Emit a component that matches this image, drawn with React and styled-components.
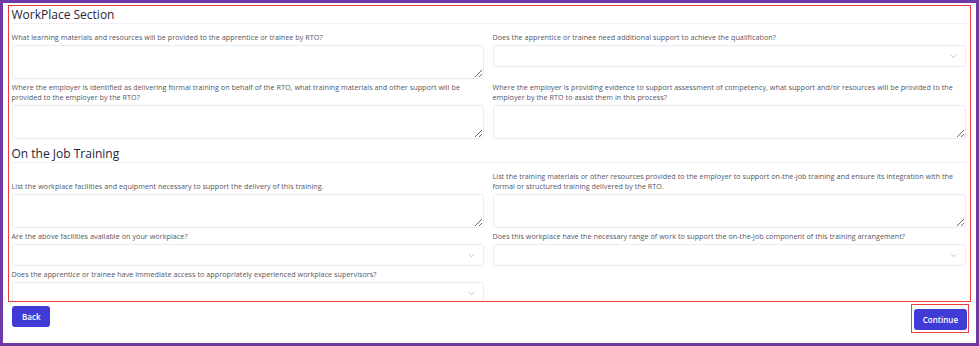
import React from 'react';
import styled, { createGlobalStyle } from 'styled-components';
import { ChevronDown } from 'lucide-react';

const GlobalStyle = createGlobalStyle`
    * { box-sizing: border-box; }
    body {
        margin: 0;
        background: #ffffff;
        font-family: "Open Sans", "Liberation Sans", sans-serif;
    }
`

// each row: [left, right] - labels sit on a common bottom line, inputs on a common top line
const workplace = [
    [
        { label: 'What learning materials and resources will be provided to the apprentice or trainee by RTO?', type: 'text' },
        { label: 'Does the apprentice or trainee need additional support to achieve the qualification?', type: 'select' },
    ],
    [
        { label: 'Where the employer is identified as delivering formal training on behalf of the RTO, what training materials and other support will be provided to the employer by the RTO?', type: 'text' },
        { label: 'Where the employer is providing evidence to support assessment of competency, what support and/or resources will be provided to the employer by the RTO to assist them in this process?', type: 'text' },
    ],
]

const onJob = [
    [
        { label: 'List the workplace facilities and equipment necessary to support the delivery of this training.', type: 'text' },
        { label: 'List the training materials or other resources provided to the employer to support on-the-job training and ensure its integration with the formal or structured training delivered by the RTO.', type: 'text' },
    ],
    [
        { label: 'Are the above facilities available on your workplace?', type: 'select' },
        { label: 'Does this workplace have the necessary range of work to support the on-the-job component of this training arrangement?', type: 'select' },
    ],
    [
        { label: 'Does the apprentice or trainee have immediate access to appropriately experienced workplace supervisors?', type: 'select' },
    ],
]

function Input({ type }) {
    if (type === 'text') return <TextArea />
    return (
        <Select>
            <ChevronDown size={9} color="#9a9aa6" strokeWidth={1.6} />
        </Select>
    )
}

function Rows({ rows }) {
    return (
        <Grid>
            {rows.map((row, r) => (
                <React.Fragment key={r}>
                    {row.map((f, i) => <Label key={'l' + i} style={{ gridRow: r * 2 + 1 }}>{f.label}</Label>)}
                    {row.map((f, i) => <Cell key={'c' + i} style={{ gridRow: r * 2 + 2 }}><Input type={f.type} /></Cell>)}
                </React.Fragment>
            ))}
        </Grid>
    )
}

function App() {
    return (
        <Frame>
            <GlobalStyle />
            <FormBox>
                <SectionTitle>WorkPlace Section</SectionTitle>
                <Rows rows={workplace} />
                <SectionTitle spaced>On the Job Training</SectionTitle>
                <Rows rows={onJob} />
            </FormBox>
            <Footer>
                <Button back>Back</Button>
                <Highlight>
                    <Button>Continue</Button>
                </Highlight>
            </Footer>
        </Frame>
    )
}

export default App

const Frame = styled.div`
    width: 979px;
    height: 346px;
    border: 3px solid #6f3aa6;
    padding: 2px 5px 0 5px;
    overflow: hidden;
`

const FormBox = styled.div`
    height: 297px;
    border: 1.5px solid #ea3d3d;
    padding: 0 3px 0 2.5px;
    overflow: hidden;
`

const SectionTitle = styled.h2`
    margin: ${p => (p.spaced ? '3px 0 8px' : '0 0 8px')};
    font-family: "Open Sans", "Liberation Sans", sans-serif;
    font-weight: 500;
    font-size: 12px;
    line-height: 17px;
    color: #23253a;
    border-bottom: 1px solid #f0f0f4;
`

const Grid = styled.div`
    display: grid;
    grid-template-columns: 472px 473px;
    column-gap: 9px;
`

const Label = styled.div`
    align-self: end;
    font-size: 7.2px;
    letter-spacing: 0.04px;
    line-height: 10px;
    color: #55555f;
    padding-bottom: 3px;
`

const Cell = styled.div`
    align-self: start;
    margin-bottom: 3px;
`

const TextArea = styled.textarea`
    display: block;
    width: 100%;
    height: 34px;
    border: 1px solid #ebebf2;
    border-radius: 3px;
    background: #fff;
    padding: 4px;
    font-size: 8px;
    outline: none;
`

const Select = styled.div`
    height: 22px;
    border: 1px solid #ebebf2;
    border-radius: 3px;
    background: #fff;
    display: flex;
    align-items: center;
    justify-content: flex-end;
    padding-right: 7px;
`

const Footer = styled.div`
    display: flex;
    justify-content: space-between;
    align-items: flex-start;
    padding: 2px 2px 0 4px;
`

const Highlight = styled.div`
    border: 1.5px solid #ea3d3d;
    padding: 1px 1px 2px 2px;
`

const Button = styled.button`
    height: 21px;
    margin-top: ${p => (p.back ? '2px' : '0')};
    padding: 0 ${p => (p.back ? '10px' : '9px')};
    border: none;
    border-radius: 3px;
    background: #3f3bd4;
    color: #ffffff;
    font-family: "Open Sans", "Liberation Sans", sans-serif;
    font-weight: 600;
    font-size: 8px;
`
